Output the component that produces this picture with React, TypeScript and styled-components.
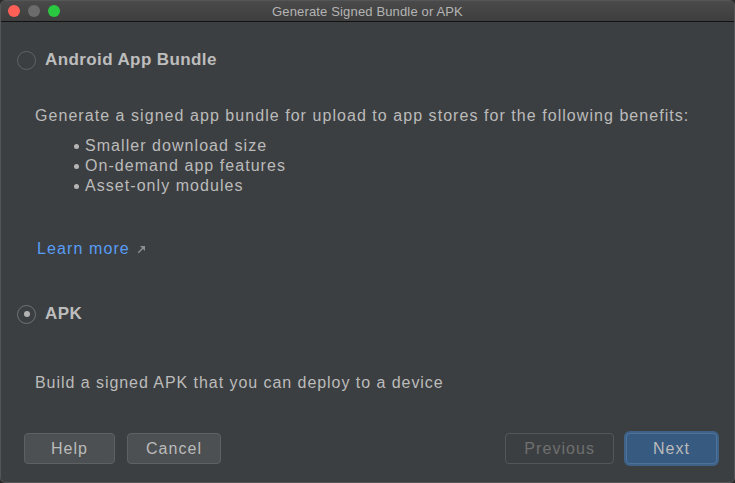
import React from "react";
import styled, { createGlobalStyle } from "styled-components";

const Global = createGlobalStyle`
  html, body { margin: 0; padding: 0; background: #2a2a2a; }
  body { width: 735px; height: 483px; overflow: hidden; }
  * { box-sizing: border-box; }
`;

const Window = styled.div`
  width: 735px;
  height: 483px;
  border: 1px solid #545556;
  border-radius: 5px;
  overflow: hidden;
  display: flex;
  flex-direction: column;
  background: #3c3f41;
  font-family: "Liberation Sans", Arial, sans-serif;
  color: #bbbbbb;
`;

const TitleBar = styled.div`
  height: 21px;
  flex: none;
  display: grid;
  grid-template-columns: 1fr auto 1fr;
  align-items: center;
  padding: 0 7px;
  background: linear-gradient(#4a4a4a, #3e3e3e);
  border-bottom: 1px solid #121212;
`;

const Lights = styled.div`
  display: flex;
  gap: 8px;
  align-items: center;
`;

const Light = styled.span<{ $color: string }>`
  width: 12px;
  height: 12px;
  border-radius: 50%;
  background: ${(p) => p.$color};
`;

const Title = styled.div`
  font-size: 13px;
  letter-spacing: 0.15px;
  color: #b4b4b4;
  white-space: nowrap;
`;

const Body = styled.div`
  flex: 1;
  display: flex;
  flex-direction: column;
  padding-left: 16px;
`;

const OptionRow = styled.div<{ $top: number }>`
  display: flex;
  align-items: center;
  gap: 9px;
  height: 24px;
  margin-top: ${(p) => p.$top}px;
`;

const Radio = styled.span<{ $checked?: boolean }>`
  width: 19px;
  height: 19px;
  border-radius: 50%;
  border: 1.5px solid ${(p) => (p.$checked ? "#707274" : "#606365")};
  display: flex;
  align-items: center;
  justify-content: center;
  &::after {
    content: "";
    display: ${(p) => (p.$checked ? "block" : "none")};
    width: 6px;
    height: 6px;
    border-radius: 50%;
    background: #b3b3b3;
  }
`;

const OptionLabel = styled.span`
  font-size: 17px;
  font-weight: bold;
  letter-spacing: 0.4px;
  color: #bdbdbd;
`;

const Text = styled.div<{ $top: number; $spacing?: number }>`
  font-size: 16px;
  line-height: 20px;
  letter-spacing: ${(p) => p.$spacing ?? 1.05}px;
  padding-left: 18px;
  margin-top: ${(p) => p.$top}px;
  white-space: nowrap;
`;

const List = styled.ul`
  list-style: none;
  margin: 10px 0 0 0;
  padding: 0 0 0 57px;
`;

const Item = styled.li`
  font-size: 16px;
  line-height: 20px;
  letter-spacing: 1.05px;
  display: flex;
  align-items: center;
  &::before {
    content: "";
    width: 5px;
    height: 5px;
    border-radius: 50%;
    background: #b5b5b5;
    margin-right: 6px;
    flex: none;
  }
`;

const LinkRow = styled.div`
  margin-top: 43px;
  padding-left: 20px;
  display: flex;
  align-items: center;
  gap: 7px;
  height: 20px;
`;

const Link = styled.a`
  font-size: 16px;
  letter-spacing: 1.1px;
  color: #589df6;
  text-decoration: none;
`;

const Footer = styled.div`
  margin-top: auto;
  display: flex;
  align-items: center;
  padding: 0 17px 18px 23px;
`;

const Group = styled.div<{ $push?: boolean }>`
  display: flex;
  gap: 12px;
  margin-left: ${(p) => (p.$push ? "auto" : "0")};
`;

const Button = styled.button<{ $variant?: "default" | "primary" | "disabled" }>`
  height: 31px;
  min-width: 91px;
  padding: 1px 18px 0;
  border-radius: 4px;
  font-family: "Liberation Sans", Arial, sans-serif;
  font-size: 16px;
  letter-spacing: 1.05px;
  cursor: default;
  border: 1px solid
    ${(p) =>
      p.$variant === "primary" ? "#4d729b" : p.$variant === "disabled" ? "#54575a" : "#5e6163"};
  background: ${(p) =>
    p.$variant === "primary" ? "#375a80" : p.$variant === "disabled" ? "transparent" : "#4c5052"};
  color: ${(p) => (p.$variant === "disabled" ? "#6e6f70" : "#bbbbbb")};
  box-shadow: ${(p) => (p.$variant === "primary" ? "0 0 0 2px #3f6289" : "none")};
`;

const Arrow = () => (
  <svg width="9" height="9" viewBox="0 0 9 9">
    <path d="M1.2 7.8 L6.8 2.2" stroke="#8e8e8e" strokeWidth="1.4" />
    <path d="M3 1 H8 V6 Z" fill="#8e8e8e" />
  </svg>
);

export default function App() {
  return (
    <>
      <Global />
      <Window>
        <TitleBar>
          <Lights>
            <Light $color="#fe5f57" />
            <Light $color="#6c6c6c" />
            <Light $color="#2ac840" />
          </Lights>
          <Title>Generate Signed Bundle or APK</Title>
          <div />
        </TitleBar>
        <Body>
          <OptionRow $top={26}>
            <Radio />
            <OptionLabel>Android App Bundle</OptionLabel>
          </OptionRow>
          <Text $top={34}>
            Generate a signed app bundle for upload to app stores for the following benefits:
          </Text>
          <List>
            <Item>Smaller download size</Item>
            <Item>On-demand app features</Item>
            <Item>Asset-only modules</Item>
          </List>
          <LinkRow>
            <Link href="#">Learn more</Link>
            <Arrow />
          </LinkRow>
          <OptionRow $top={43}>
            <Radio $checked />
            <OptionLabel>APK</OptionLabel>
          </OptionRow>
          <Text $top={47} $spacing={0.95}>
            Build a signed APK that you can deploy to a device
          </Text>
        </Body>
        <Footer>
          <Group>
            <Button>Help</Button>
            <Button>Cancel</Button>
          </Group>
          <Group $push>
            <Button $variant="disabled">Previous</Button>
            <Button $variant="primary">Next</Button>
          </Group>
        </Footer>
      </Window>
    </>
  );
}
